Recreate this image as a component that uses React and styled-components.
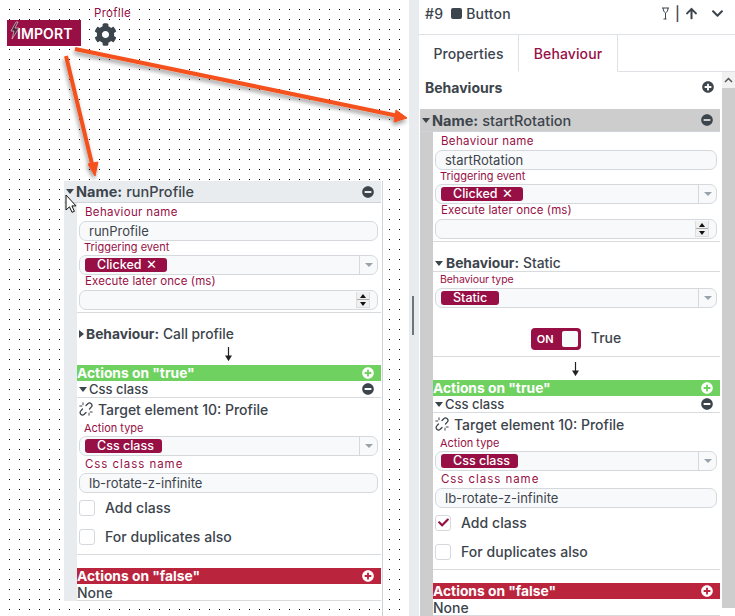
import React from "react";
import styled, { createGlobalStyle } from "styled-components";
import { FaCog, FaPlusCircle, FaMinusCircle, FaArrowUp, FaChevronDown, FaCheck } from "react-icons/fa";

const wine = "#970f45";
const ink = "#3c444c";
const font = `"Inter", "Noto Sans", "Liberation Sans", sans-serif`;

const Global = createGlobalStyle`
  html, body { margin: 0; padding: 0; background: #fff; overflow: hidden; }
  body { font-family: ${font}; color: ${ink}; }
  * { box-sizing: border-box; }
`;

const Page = styled.div`
  width: 735px; height: 616px; display: grid; grid-template-columns: 409px 10px 316px; overflow: hidden; position: relative;
`;
const Canvas = styled.div`
  position: relative;
  background-image: radial-gradient(circle at 0.5px 0.5px, #000 0.8px, transparent 0.85px);
  background-size: 10px 10px;
  background-position: 9px 9px;
`;
const Splitter = styled.div`
  background: #e9ecef; display: flex; align-items: flex-start; justify-content: center;
  padding: 296px 2px 0 0;
`;
const Grip = styled.div`width: 2px; height: 39px; background: #6c757d;`;
const ImportButton = styled.div`
  position: absolute; left: 7px; top: 20px; width: 74px; height: 26px; background: ${wine};
  color: #fff; font-size: 14px; font-weight: 600; display: flex; align-items: center; padding: 1px 0 0 10px;
  letter-spacing: 0.1px;
`;
const Bolt = styled.svg`position: absolute; left: 2px; top: 1px;`;
const ProfileNode = styled.div`
  position: absolute; left: 94px; top: 7px; display: flex; flex-direction: column; align-items: flex-start; width: 40px;
  font-size: 11.5px; color: ${wine}; gap: 3px; letter-spacing: 0.3px;
`;
const ProfileLabel = styled.span`line-height: 13px;`;
const Overlay = styled.svg`position: absolute; left: 0; top: 0; pointer-events: none; z-index: 5;`;

const Floating = styled.div`
  position: absolute; left: 64px; top: 181px; width: 319px; height: 435px; padding-right: 1px; border-right: 1px solid #ced4da;
`;

const Panel = styled.div`display: flex; flex-direction: column; height: 616px; background: #fff;`;
const Header = styled.div`
  height: 35px; flex: none; border-bottom: 1px solid #dee2e6; display: flex; align-items: center; padding: 0 11px 8px 6px;
  font-size: 14px; font-weight: 500; letter-spacing: 0.2px;
`;
const Square = styled.span`width: 11px; height: 11px; background: ${ink}; border-radius: 2px; margin: 0 4px 0 8px;`;
const HeaderTools = styled.div`margin-left: auto; display: flex; align-items: center; gap: 5px; font-size: 14px;`;
const Chevron = styled(FaChevronDown)`margin-left: 8px;`;
const Tabs = styled.div`height: 37px; flex: none; display: flex; border-bottom: 1px solid #dee2e6;`;
const Tab = styled.div`
  height: 37px; width: ${p => p.$w}px; display: flex; align-items: center; justify-content: center; font-size: 14px; font-weight: 500; letter-spacing: 0.1px;
  color: ${p => (p.$active ? wine : ink)}; background: #fff;
  ${p => p.$active && `border: 1px solid #dee2e6; border-top: 0; border-bottom: 1px solid #fff;`}
`;
const Scrolling = styled.div`flex: 1; display: grid; grid-template-columns: 303px 13px; min-height: 0;`;
const ScrollContent = styled.div`display: flex; flex-direction: column; padding: 0 2px 0 1px; min-width: 0; overflow: hidden;`;
const Track = styled.div`background: #cdcdcd; margin-bottom: 8px; position: relative;`;
const TrackUp = styled.div`
  height: 16px; background: #f1f1f1; display: flex; align-items: center; justify-content: center;
`;
const Heading = styled.div`
  height: 37px; flex: none; display: flex; align-items: center; justify-content: space-between; padding: 0 6px 7px 5px; font-size: 14px; font-weight: 700;
`;

const Card = styled.div`display: flex; flex-direction: column;`;
const NameBar = styled.div`
  height: ${p => p.$h}px; flex: none; background: ${p => p.$bg}; display: flex; align-items: center; font-size: 14.5px; font-weight: 500;
  padding: 0 7px 0 2px; border-bottom: 1px solid #ced4da;
`;
const Strong = styled.b`font-weight: 700; margin-right: 4px;`;
const RightIcon = styled.span`margin-left: auto; display: flex; color: ${p => p.$c || ink};`;
const Body = styled.div`
  margin-left: 13px; background: #fff; display: flex; flex-direction: column; font-size: 14px;
`;
const Gutter = styled.div`background: ${p => p.$bg}; display: flex; flex-direction: column;`;
const Caret = styled.span`
  width: 0; height: 0; margin: ${p => p.$m || "0 2px 0 0"};
  ${p => p.$right
    ? `border-top: 4px solid transparent; border-bottom: 4px solid transparent; border-left: 5px solid ${ink};`
    : `border-left: 4px solid transparent; border-right: 4px solid transparent; border-top: 5px solid ${ink};`}
`;
const Label = styled.div`
  color: ${wine}; font-size: ${p => p.$fs || 11}px; line-height: 14px; height: 14px; flex: none;
  margin: ${p => p.$t ?? 1}px 0 0 ${p => p.$l ?? 7}px; letter-spacing: ${p => p.$ls ?? 0}px; white-space: nowrap;
`;
const InputBox = styled.div`
  height: 20px; flex: none; margin: 2px 3px 0 2px; border: 1px solid #d5d9dd; border-radius: 7px; background: #f8f9fa;
  display: flex; align-items: center; font-size: 13px; padding-left: 9px; position: relative;
`;
const SelectBox = styled(InputBox)`margin-top: 1px; padding-left: 5px;`;
const Chip = styled.span`
  background: ${wine}; color: #fff; border-radius: 3px; height: 14px; width: ${p => p.$w}px; font-size: 12.5px; font-weight: 500;
  display: flex; align-items: center; gap: 5px; padding-left: 12px; line-height: 14px;
`;
const DropButton = styled.span`
  position: absolute; right: 0; top: 0; bottom: 0; width: 18px; border-left: 1px solid #d5d9dd; display: flex; align-items: center; justify-content: center;
`;
const DropCaret = styled.span`width: 0; height: 0; border-left: 4px solid transparent; border-right: 4px solid transparent; border-top: 4px solid #9aa3ab;`;
const Spinner = styled.span`
  position: absolute; right: 7px; top: 1px; bottom: 1px; width: 14px; display: flex; flex-direction: column; gap: 1px; background: #aaa; border: 1px solid #ddd; border-top: 0;
`;
const Spin = styled.span`flex: 1; background: #f0f0f0; display: flex; align-items: center; justify-content: center;`;
const SpinTri = styled.span`
  width: 0; height: 0; border-left: 3px solid transparent; border-right: 3px solid transparent;
  ${p => (p.$up ? "border-bottom: 4px solid #111;" : "border-top: 4px solid #111;")}
`;
const Sep = styled.div`height: 1px; flex: none; background: #d8dbde; margin-top: ${p => p.$t || 0}px;`;
const BehaviourRow = styled.div`
  height: ${p => (p.$ruled ? 17 : 16)}px; flex: none; margin-top: 13px; display: flex; align-items: center; font-size: 13.8px; font-weight: 500; padding-left: 2px;
  ${p => p.$ruled && "border-bottom: 1px solid #d8dbde;"}
`;
const ArrowDown = styled.div`
  height: 23px; flex: none; display: flex; align-items: center; justify-content: center; padding-right: 2px;
`;
const ActionBar = styled.div`
  height: 16px; flex: none; background: ${p => p.$bg}; color: #fff; font-size: 13.8px; font-weight: 700; display: flex; align-items: center; padding-right: 7px;
  margin-top: ${p => p.$t || 0}px;
`;
const ClassRow = styled.div`
  height: 17px; flex: none; display: flex; align-items: center; padding: 0 7px 0 2px; border-bottom: 1px solid #d8dbde; font-size: 13px; font-weight: 500;
`;
const Target = styled.div`
  height: 22px; flex: none; display: flex; align-items: center; gap: 5px; padding-left: 2px; font-size: 14px; font-weight: 500;
`;
const CheckRow = styled.div`
  height: 29px; flex: none; display: flex; align-items: center; gap: 10px; padding-left: 2px; font-size: 14px; font-weight: 500; letter-spacing: 0.05px;
`;
const Box = styled.span`
  width: 16px; height: 16px; border: 1px solid #d5d9dd; border-radius: 3px; background: #fff; display: flex; align-items: center; justify-content: center; color: ${wine};
`;
const NoneRow = styled.div`
  height: 17px; flex: none; display: flex; align-items: center; font-size: 14px; font-weight: 500; border-bottom: 1px solid #d8dbde;
`;
const ToggleRow = styled.div`
  height: 48px; flex: none; display: flex; align-items: center; justify-content: center; gap: 10px; padding: 14px 1px 0 0; font-size: 14px; font-weight: 500;
`;
const Toggle = styled.div`
  width: 50px; height: 22px; background: ${wine}; border-radius: 4px; color: #fff; font-size: 11px; font-weight: 600;
  display: flex; align-items: center; justify-content: space-between; padding: 0 3px 0 6px;
`;
const ToggleText = styled.span`line-height: 16px; margin-bottom: 3px;`;
const Knob = styled.span`width: 16px; height: 16px; background: #f8f9fa; border-radius: 2px;`;
const Cursor = styled.svg`position: absolute; left: 65px; top: 194px; z-index: 6;`;

const Field = ({ label, value, ...labelProps }) => (
  <><Label {...labelProps}>{label}</Label><InputBox>{value}</InputBox></>
);
const SelectField = ({ label, chip, w, x, ...labelProps }) => (
  <>
    <Label {...labelProps}>{label}</Label>
    <SelectBox>
      <Chip $w={w}>{chip}{x && <span>✕</span>}</Chip>
      <DropButton><DropCaret /></DropButton>
    </SelectBox>
  </>
);
const NameAndEvent = ({ name }) => (
  <>
    <Field label="Behaviour name" value={name} $t={2} $l={8} $fs={11.5} $ls={0.35} />
    <SelectField label="Triggering event" chip="Clicked" w={82} x $t={-1} />
    <Label $t={-1} $l={8} $fs={11.5} $ls={0.1}>Execute later once (ms)</Label>
    <InputBox>
      <Spinner>
        <Spin><SpinTri $up /></Spin>
        <Spin><SpinTri /></Spin>
      </Spinner>
    </InputBox>
    <Sep $t={2} />
  </>
);

const UnlinkIcon = () => (
  <svg width="14" height="14" viewBox="0 0 14 14" fill="none" stroke={ink} strokeWidth="1.300" strokeLinecap="round">
    <path d="M7 3.500l1.800-1.800a2.400 2.400 0 0 1 3.400 3.400L10.500 7" />
    <path d="M7 10.500l-1.800 1.800a2.400 2.400 0 0 1-3.400-3.400L3.500 7" />
    <path d="M4 .8v2M.8 4h2M10 13.200v-2M13.200 10h-2" strokeWidth="1" />
  </svg>
);

const Actions = ({ checked }) => (
  <>
    <ActionBar $bg="#6fd160">Actions on "true"<RightIcon $c="#fff"><FaPlusCircle size={12} /></RightIcon></ActionBar>
    <ClassRow><Caret />Css class<RightIcon><FaMinusCircle size={12} /></RightIcon></ClassRow>
    <Target><UnlinkIcon />Target element 10: Profile</Target>
    <SelectField label="Action type" chip="Css class" w={77} />
    <Field label="Css class name" value="lb-rotate-z-infinite" $l={8} $fs={11.5} $ls={0.95} />
    <CheckRow><Box>{checked && <FaCheck size={11} />}</Box>Add class</CheckRow>
    <CheckRow><Box />For duplicates also</CheckRow>
    <Sep $t={3} />
    <ActionBar $bg="#bb243d" $t={13}>Actions on "false"<RightIcon $c="#fff"><FaPlusCircle size={12} /></RightIcon></ActionBar>
    <NoneRow>None</NoneRow>
  </>
);

const DownArrow = () => (
  <ArrowDown>
    <svg width="7" height="14" viewBox="0 0 7 14"><path d="M3.500 0v12M1 9l2.500 4L6 9z" stroke="#222" strokeWidth="1.200" fill="#222" /></svg>
  </ArrowDown>
);

const ProfileCard = () => (
  <Card>
    <NameBar $bg="#e9ecef" $h={22}>
      <Caret /><Strong>Name:</Strong>runProfile
      <RightIcon><FaMinusCircle size={12} /></RightIcon>
    </NameBar>
    <Gutter $bg="#e9ecef">
      <Body>
        <NameAndEvent name="runProfile" />
        <BehaviourRow><Caret $right $m="0 2px 0 0" /><Strong>Behaviour:</Strong>Call profile</BehaviourRow>
        <DownArrow />
        <Actions />
      </Body>
    </Gutter>
  </Card>
);

const RotationCard = () => (
  <Card>
    <NameBar $bg="#cdcdcd" $h={23}>
      <Caret /><Strong>Name:</Strong>startRotation
      <RightIcon><FaMinusCircle size={12} /></RightIcon>
    </NameBar>
    <Gutter $bg="#cdcdcd">
      <Body>
        <NameAndEvent name="startRotation" />
        <BehaviourRow $ruled><Caret $m="0 3px 0 0" /><Strong>Behaviour:</Strong>Static</BehaviourRow>
        <SelectField label="Behaviour type" chip="Static" w={58} $fs={10.5} $ls={-0.1} />
        <ToggleRow><Toggle>ON<Knob /></Toggle><ToggleText>True</ToggleText></ToggleRow>
        <Sep />
        <DownArrow />
        <Actions checked />
      </Body>
    </Gutter>
  </Card>
);

export default function App() {
  return (
    <Page>
      <Global />
      <Canvas>
        <ImportButton>
          <Bolt width="12" height="20" viewBox="0 0 12 20"><path d="M7 1L2 10h3l-2 8 7-11H6l3-6z" fill="#4a2a3a" stroke="#e9c9d6" strokeWidth=".7" /></Bolt>
          IMPORT
        </ImportButton>
        <ProfileNode>
          <ProfileLabel>Profile</ProfileLabel>
          <FaCog size={23} color={ink} />
        </ProfileNode>
        <Floating><ProfileCard /></Floating>
        <Cursor width="12" height="20" viewBox="0 0 12 20">
          <path d="M1 1v15l3.500-3.200 2.500 5.500 2.400-1-2.500-5.400H11z" fill="#fff" stroke="#111" strokeWidth="1" />
        </Cursor>
      </Canvas>
      <Splitter><Grip /></Splitter>
      <Panel>
        <Header>
          #9<Square />Button
          <HeaderTools>
            <svg width="9" height="13" viewBox="0 0 9 13"><path d="M1 1h7M2 1c.5 3 1 4 2.500 5C6 5 7 4 7 1M4.500 6v6M2.500 12h3" fill="none" stroke="#3c444c" /></svg>
            <span>|</span>
            <FaArrowUp size={13} />
            <Chevron size={13} />
          </HeaderTools>
        </Header>
        <Tabs>
          <Tab $w={99}>Properties</Tab>
          <Tab $w={100} $active>Behaviour</Tab>
        </Tabs>
        <Scrolling>
          <ScrollContent>
            <Heading>Behaviours<FaPlusCircle size={12} /></Heading>
            <RotationCard />
          </ScrollContent>
          <Track>
            <TrackUp><svg width="9" height="6" viewBox="0 0 9 6"><path d="M1 5l3.500-3.500L8 5" fill="none" stroke="#555" strokeWidth="1.500" /></svg></TrackUp>
          </Track>
        </Scrolling>
      </Panel>
      <Overlay width="735" height="616" viewBox="0 0 735 616">
        <defs>
          <filter id="arrowShadow" x="-20%" y="-20%" width="140%" height="140%">
            <feDropShadow dx="-1" dy="3" stdDeviation="2" floodColor="#000" floodOpacity=".4" />
          </filter>
        </defs>
        <g filter="url(#arrowShadow)" fill="#f4511e" stroke="#f4511e">
          <path d="M75 49L396 115.500" strokeWidth="4" fill="none" />
          <path d="M407 118L396 110L394 122z" strokeWidth="1" />
          <path d="M66 56L92 164" strokeWidth="4" fill="none" />
          <path d="M95 176L88 164L98 162z" strokeWidth="1" />
        </g>
      </Overlay>
    </Page>
  );
}
